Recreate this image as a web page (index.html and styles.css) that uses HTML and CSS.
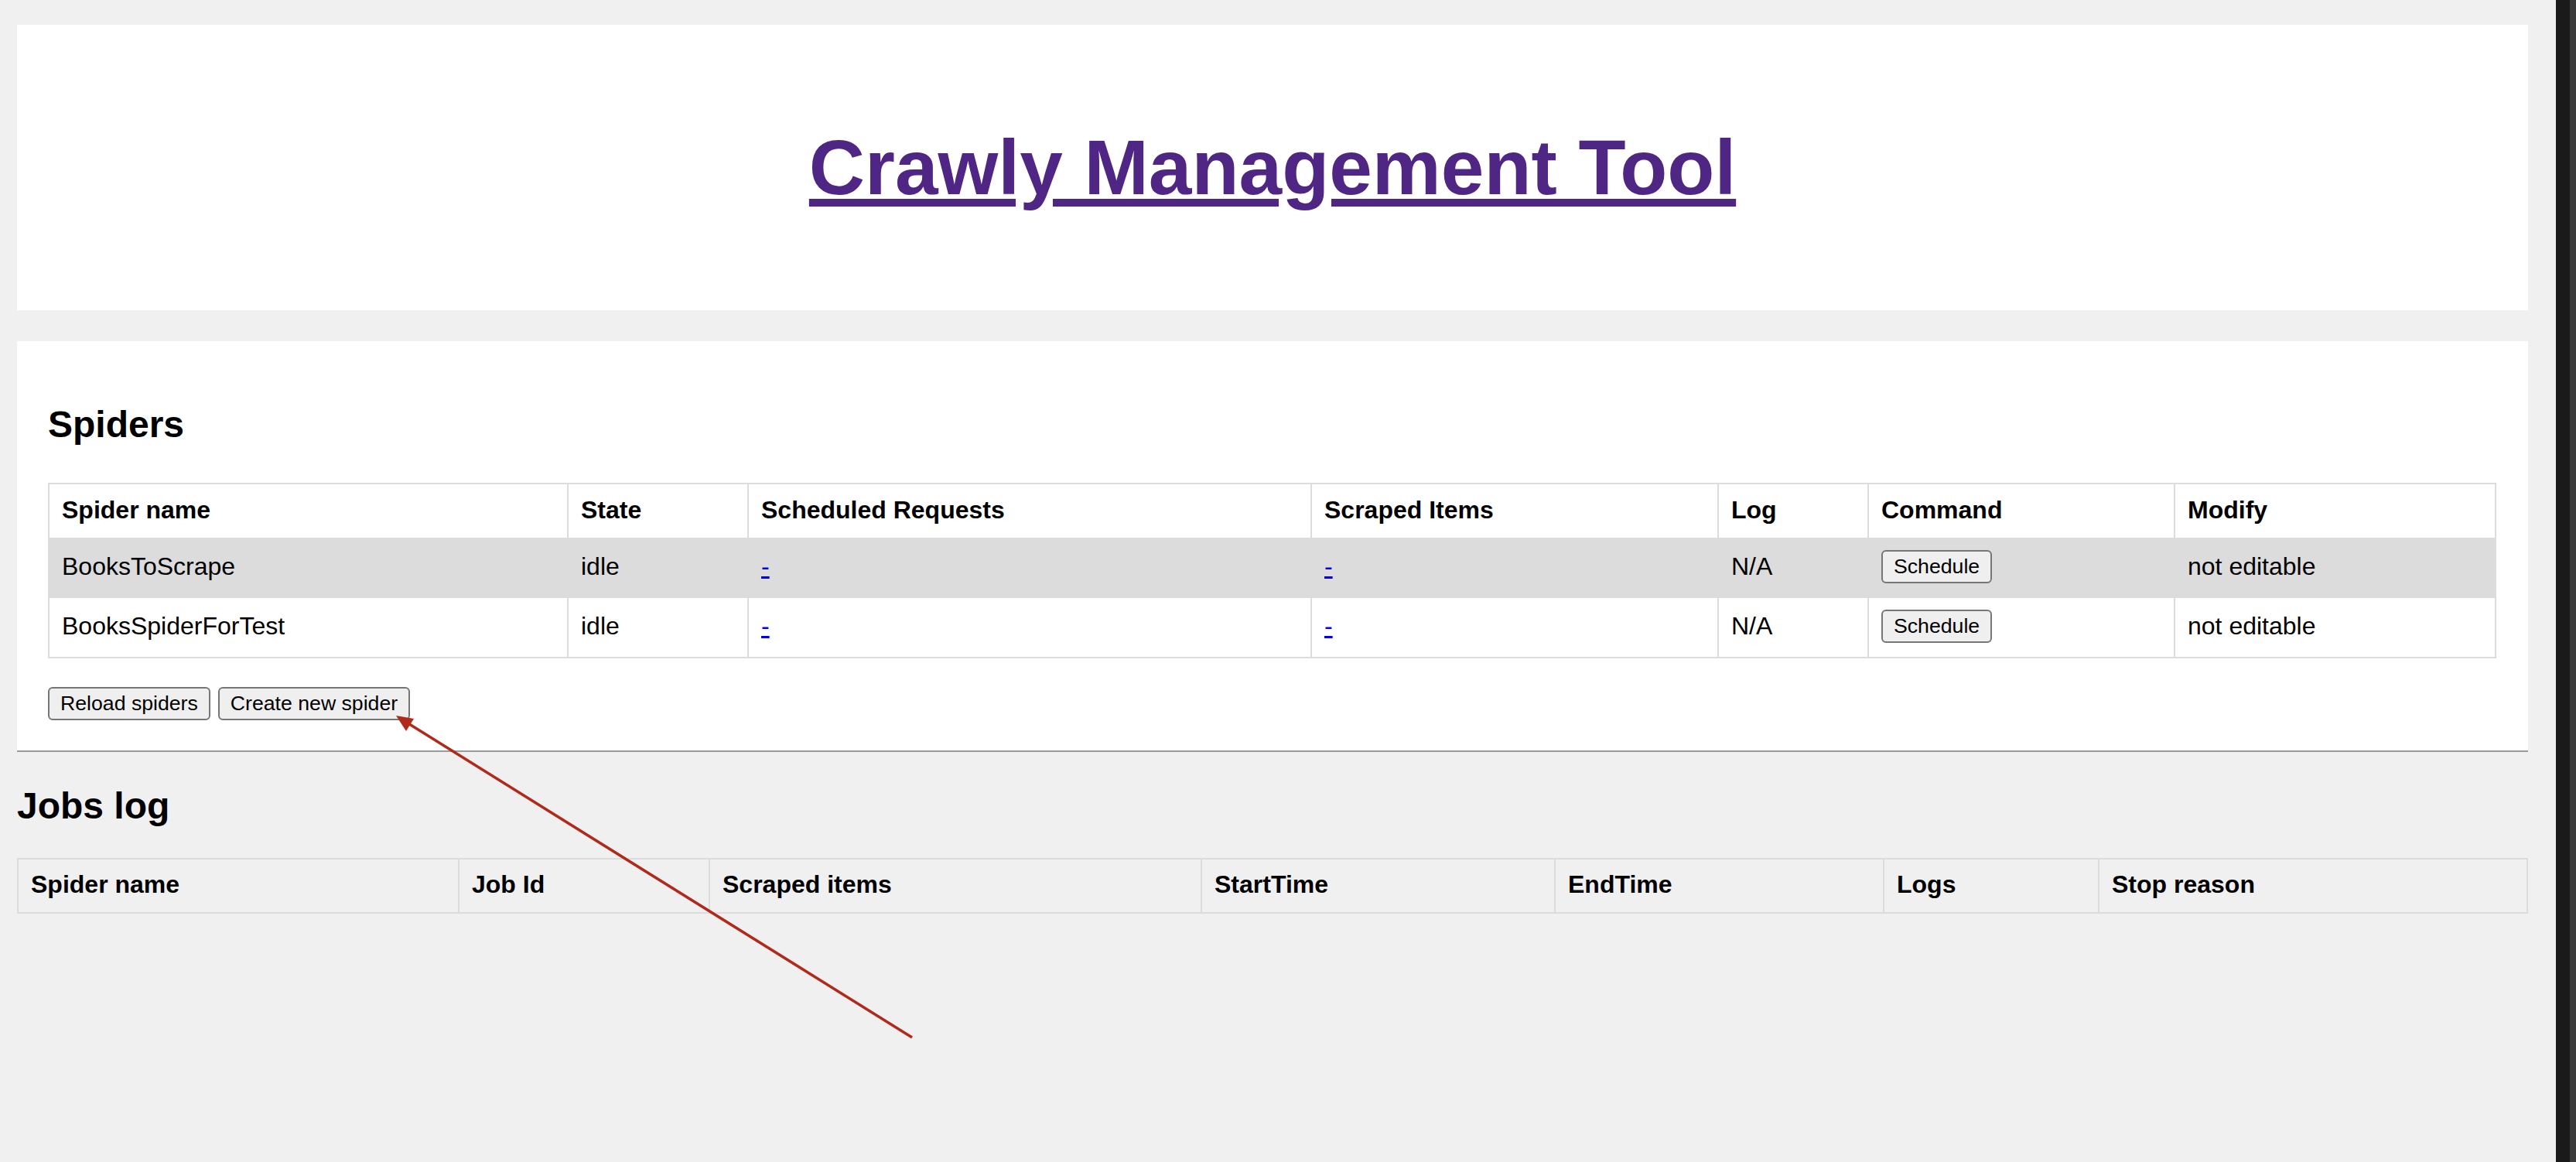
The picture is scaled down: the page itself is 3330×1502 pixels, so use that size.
FILE: index.html
```html
<!DOCTYPE html>
<html lang="en">
<head>
<meta charset="utf-8">
<title>Crawly Management Tool</title>
<link rel="stylesheet" href="styles.css">
</head>
<body>
<div class="screen">
  <div class="main">
    <div class="content">
      <header class="header">
        <h1 class="title"><a href="#" class="title-link">Crawly Management Tool</a></h1>
      </header>

      <section class="panel">
        <h2 class="section-title">Spiders</h2>
        <table class="grid spiders">
          <thead>
            <tr class="row-head">
              <th class="s1">Spider name</th>
              <th class="s2">State</th>
              <th class="s3">Scheduled Requests</th>
              <th class="s4">Scraped Items</th>
              <th class="s5">Log</th>
              <th class="s6">Command</th>
              <th class="s7">Modify</th>
            </tr>
          </thead>
          <tbody>
            <tr class="row-a">
              <td>BooksToScrape</td>
              <td>idle</td>
              <td><a href="#" class="dash">-</a></td>
              <td><a href="#" class="dash">-</a></td>
              <td>N/A</td>
              <td><button class="btn">Schedule</button></td>
              <td>not editable</td>
            </tr>
            <tr class="row-b">
              <td>BooksSpiderForTest</td>
              <td>idle</td>
              <td><a href="#" class="dash">-</a></td>
              <td><a href="#" class="dash">-</a></td>
              <td>N/A</td>
              <td><button class="btn">Schedule</button></td>
              <td>not editable</td>
            </tr>
          </tbody>
        </table>
        <div class="actions">
          <button class="btn">Reload spiders</button>
          <button class="btn">Create new spider</button>
        </div>
      </section>

      <section class="jobs">
        <h2 class="section-title jobs-title">Jobs log</h2>
        <table class="grid jobs-table">
          <thead>
            <tr class="row-jobs">
              <th class="j1">Spider name</th>
              <th class="j2">Job Id</th>
              <th class="j3">Scraped items</th>
              <th class="j4">StartTime</th>
              <th class="j5">EndTime</th>
              <th class="j6">Logs</th>
              <th class="j7">Stop reason</th>
            </tr>
          </thead>
          <tbody></tbody>
        </table>
      </section>
    </div>
  </div>
  <div class="strip"></div>

  <svg class="annotation" width="3330" height="1502" viewBox="0 0 3330 1502">
    <line x1="1179" y1="1341" x2="526" y2="934" stroke="#b02a1c" stroke-width="3.5"/>
    <polygon points="512,925 535,929 525,945" fill="#b02a1c"/>
  </svg>
</div>
</body>
</html>
```

FILE: styles.css
```css
html, body {
  margin: 0;
  padding: 0;
}

body {
  background: #f0f0f0;
  font-family: "Liberation Sans", Arial, sans-serif;
  color: #000;
  overflow: hidden;
}

.screen {
  position: relative;
  display: flex;
  width: 3330px;
  height: 1502px;
}

.main {
  width: 3304px;
  padding: 32px 0 0 22px;
  box-sizing: border-box;
}

.content {
  width: 3246px;
}

.strip {
  width: 26px;
  flex: none;
  background: linear-gradient(to right, #1a1a1a 0, #1a1a1a 18px, #3b3b3b 18px, #3b3b3b 26px);
}

/* Header */
.header {
  background: #fff;
  height: 369px;
  box-sizing: border-box;
  padding-top: 127px;
}

.title {
  margin: 0;
  font-size: 100px;
  line-height: 115px;
  font-weight: bold;
  text-align: center;
}

.title-link {
  color: #4f2683;
  text-decoration: underline;
  text-decoration-thickness: 10px;
  text-underline-offset: 6px;
}

/* Spiders panel */
.panel {
  margin-top: 40px;
  background: #fff;
  padding: 80px 41px 39px 40px;
  border-bottom: 2px solid #9a9a9a;
}

.section-title {
  margin: 0;
  font-size: 48px;
  line-height: 55px;
  font-weight: bold;
}

.grid {
  border-collapse: separate;
  border-spacing: 0;
  table-layout: fixed;
  border: 2px solid #dcdcdc;
  font-size: 32px;
}

.grid th,
.grid td {
  box-sizing: border-box;
  padding: 0 16px 3px 16px;
  text-align: left;
  vertical-align: middle;
  border-right: 2px solid #dcdcdc;
  white-space: nowrap;
}

.grid th:last-child,
.grid td:last-child {
  border-right: none;
}

.grid th {
  font-weight: bold;
}

.spiders {
  margin-top: 48px;
  width: 3165px;
}

.s1 { width: 671px; }
.s2 { width: 233px; }
.s3 { width: 728px; }
.s4 { width: 526px; }
.s5 { width: 194px; }
.s6 { width: 396px; }
.s7 { width: 413px; }

.row-head { height: 69px; }
.row-a { height: 78px; background: #dcdcdc; }
.row-b { height: 76px; background: #fff; }

.dash {
  color: #0000ee;
  text-decoration: underline;
}

.btn {
  font-family: "Liberation Sans", Arial, sans-serif;
  font-size: 26.67px;
  line-height: 31px;
  padding: 4px 14px;
  margin: 0;
  border: 2px solid #767676;
  border-radius: 6px;
  background: #efefef;
  color: #000;
}

.actions {
  display: flex;
  gap: 10px;
  margin-top: 37px;
}

/* Jobs */
.jobs-title {
  margin-top: 42px;
}

.jobs-table {
  margin-top: 40px;
  width: 3246px;
}

.row-jobs { height: 68px; }

.j1 { width: 570px; }
.j2 { width: 324px; }
.j3 { width: 636px; }
.j4 { width: 457px; }
.j5 { width: 425px; }
.j6 { width: 278px; }
.j7 { width: 552px; }

/* Annotation arrow drawn over the page */
.annotation {
  position: absolute;
  left: 0;
  top: 0;
  pointer-events: none;
}
```
